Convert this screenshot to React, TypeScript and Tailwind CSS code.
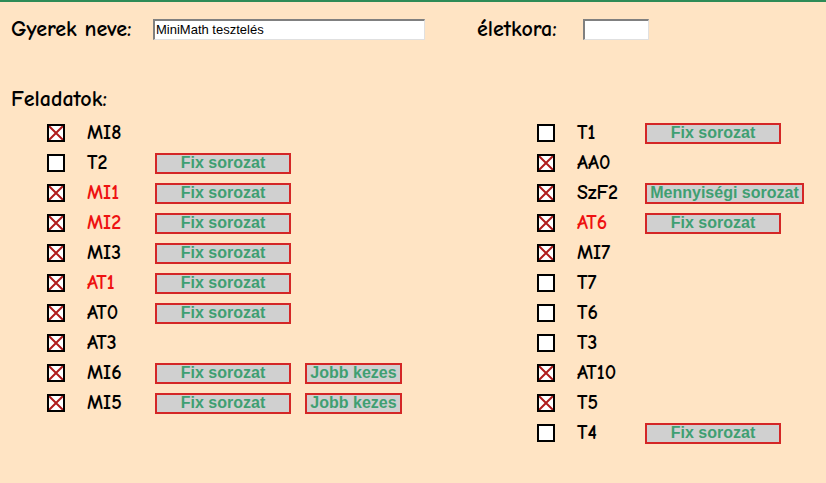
import React from 'react'

type Task = {
  name: string
  checked: boolean
  red?: boolean
  buttons?: { label: string; w: string }[]
}

const fix = { label: 'Fix sorozat', w: 'w-[136px]' }
const jobb = { label: 'Jobb kezes', w: 'w-[97px]' }
const menny = { label: 'Mennyiségi sorozat', w: 'w-[159px]' }

const left: Task[] = [
  { name: 'MI8', checked: true },
  { name: 'T2', checked: false, buttons: [fix] },
  { name: 'MI1', checked: true, red: true, buttons: [fix] },
  { name: 'MI2', checked: true, red: true, buttons: [fix] },
  { name: 'MI3', checked: true, buttons: [fix] },
  { name: 'AT1', checked: true, red: true, buttons: [fix] },
  { name: 'AT0', checked: true, buttons: [fix] },
  { name: 'AT3', checked: true },
  { name: 'MI6', checked: true, buttons: [fix, jobb] },
  { name: 'MI5', checked: true, buttons: [fix, jobb] },
]

const right: Task[] = [
  { name: 'T1', checked: false, buttons: [fix] },
  { name: 'AA0', checked: true },
  { name: 'SzF2', checked: true, buttons: [menny] },
  { name: 'AT6', checked: true, red: true, buttons: [fix] },
  { name: 'MI7', checked: true },
  { name: 'T7', checked: false },
  { name: 'T6', checked: false },
  { name: 'T3', checked: false },
  { name: 'AT10', checked: true },
  { name: 'T5', checked: true },
  { name: 'T4', checked: false, buttons: [fix] },
]

const comic = "font-['Comic_Sans_MS','Comic_Neue','DejaVu_Sans',sans-serif]"

function Box({ checked }: { checked: boolean }) {
  return (
    <div className="w-[18px] h-[18px] border-2 border-black bg-white shrink-0">
      {checked && (
        <svg viewBox="0 0 14 14" className="w-full h-full">
          <path d="M0 0 L14 14 M14 0 L0 14" stroke="#b01c1c" strokeWidth="2" />
        </svg>
      )}
    </div>
  )
}

function Row({ task }: { task: Task }) {
  return (
    <div className="flex items-center h-[30px]">
      <Box checked={task.checked} />
      <span
        className={`${comic} font-bold text-[20px] leading-[30px] w-[68px] ml-[22px] ${task.red ? 'text-[#ee1111]' : 'text-black'}`}
      >
        {task.name}
      </span>
      {task.buttons?.map((b, i) => (
        <div
          key={i}
          className={`${b.w} h-[21px] ${i > 0 ? 'ml-[14px]' : ''} border-2 border-[#d42626] bg-[#d0d0d0] flex items-center justify-center font-['Liberation_Sans',Arial,sans-serif] font-bold text-[16px] text-[#3f9f72] whitespace-nowrap`}
        >
          {b.label}
        </div>
      ))}
    </div>
  )
}

export default function App() {
  return (
    <div className={`w-[826px] h-[483px] bg-[#ffe4c4] border-t-2 border-[#2e8b57] ${comic} text-black`}>
      {/* Header */}
      <div className="flex items-center pl-[11px] pt-[17px]">
        <span className="w-[142px] text-[22px] font-bold leading-[21px]">Gyerek neve:</span>
        <div className="w-[272px] h-[21px] bg-white border-t-2 border-l-2 border-t-[#808080] border-l-[#808080] border-b border-r border-b-[#e0e0e0] border-r-[#e0e0e0] flex items-center pl-[1px] font-['Liberation_Sans',Arial,sans-serif] text-[13px]">
          MiniMath tesztelés
        </div>
        <span className="ml-[52px] w-[106px] text-[22px] font-bold leading-[21px]">életkora:</span>
        <div className="w-[66px] h-[21px] bg-white border-t-2 border-l-2 border-t-[#808080] border-l-[#808080] border-b border-r border-b-[#e0e0e0] border-r-[#e0e0e0]" />
      </div>

      <div className="pl-[11px] mt-[46px] text-[22px] font-bold leading-[26px]">Feladatok:</div>

      {/* Tasks */}
      <div className="flex mt-[6px]">
        <div className="ml-[47px] w-[490px]">
          {left.map((t) => (
            <Row key={t.name} task={t} />
          ))}
        </div>
        <div>
          {right.map((t) => (
            <Row key={t.name} task={t} />
          ))}
        </div>
      </div>
    </div>
  )
}
